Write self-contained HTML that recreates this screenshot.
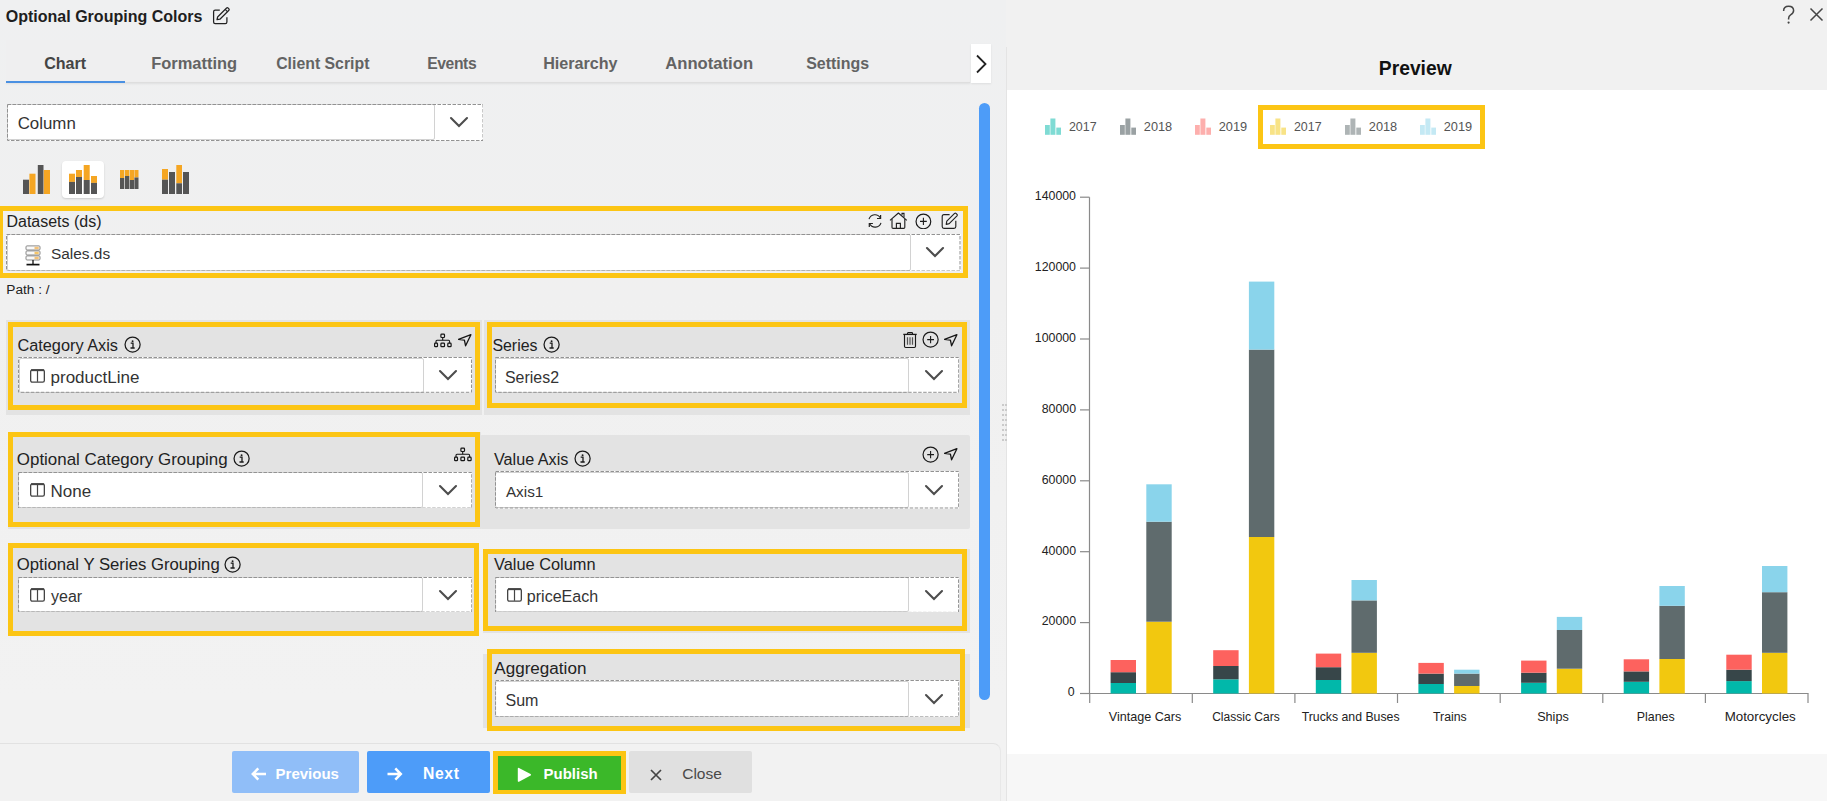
<!DOCTYPE html><html><head><meta charset="utf-8"><style>
html,body{margin:0;padding:0;}
body{width:1827px;height:801px;overflow:hidden;position:relative;background:#f0f0f1;font-family:"Liberation Sans", sans-serif;}
.a{position:absolute;}
.t{position:absolute;white-space:nowrap;}
</style></head><body><div class="a" style="left:0.0px;top:0.0px;width:1006.0px;height:801.0px;background:linear-gradient(#eff0f1 0px,#f0f0f0 300px,#f2f2f2 700px);"></div><div class="a" style="left:1006.0px;top:0.0px;width:821.0px;height:801.0px;background:#f1f1f1;"></div><svg class="a" style="left:212.0px;top:7.0px;" width="19" height="19" viewBox="0 0 19 19"><path d="M7.8 3.1 H3.2 Q1.6 3.1 1.6 4.7 V15.1 Q1.6 16.7 3.2 16.7 H13.3 Q14.9 16.7 14.9 15.1 V10.2" fill="none" stroke="#222" stroke-width="1.25"/><path d="M5.0 12.7 L5.6 10.0 L14.6 1.0 Q15.3 0.4 16.0 1.0 L16.9 1.9 Q17.5 2.6 16.9 3.3 L7.9 12.2 Z" fill="none" stroke="#222" stroke-width="1.2" stroke-linejoin="round"/><path d="M13.2 2.4 L15.6 4.8" stroke="#222" stroke-width="1.1"/></svg><div class="a" style="left:6.0px;top:40.0px;width:964.0px;height:43.0px;background:#efeff0;"></div><div class="a" style="left:6.0px;top:82.0px;width:964.0px;height:1.0px;background:#dedede;box-shadow:0 1px 2px rgba(0,0,0,0.10);"></div><div class="a" style="left:6.0px;top:80.8px;width:119.0px;height:2.2px;background:#4a90e2;"></div><div class="a" style="left:971.0px;top:44.0px;width:20.0px;height:39.0px;background:#fff;box-shadow:0 1px 2px rgba(0,0,0,0.08);"></div><svg class="a" style="left:975.0px;top:54.0px;" width="13" height="20" viewBox="0 0 13 20"><polyline points="2,1.5 10.5,10 2,18.5" fill="none" stroke="#222" stroke-width="1.8"/></svg><div class="a" style="left:6.5px;top:103.6px;width:476.5px;height:37.0px;background:#fff;"></div><div class="a" style="left:7.0px;top:104.1px;width:427.5px;height:36.0px;background:#fff;border:1px solid #d2d2d2;border-radius:2px;box-sizing:border-box;"></div><svg class="a" style="left:6.5px;top:103.6px;" width="476.5" height="37.0" viewBox="0 0 476.5 37.0"><rect x="0.5" y="0.5" width="475.5" height="36.0" fill="none" stroke="#929292" stroke-width="1" stroke-dasharray="3.5 1.5"/></svg><svg class="a" style="left:446.8px;top:114.1px;" width="24" height="16" viewBox="0 0 24 16"><polyline points="4.0,4.1 12,12.1 20.0,4.1" fill="none" stroke="#4d4d4d" stroke-width="2.1" stroke-linecap="round" stroke-linejoin="miter"/></svg><div class="a" style="left:62.0px;top:161.3px;width:42.0px;height:36.7px;background:#fff;border-radius:4px;box-shadow:0 1px 2px rgba(0,0,0,0.15);"></div><svg class="a" style="left:0.0px;top:0.0px;pointer-events:none" width="200" height="200" viewBox="0 0 200 200"><rect x="23" y="179.7" width="6" height="14.300000000000011" fill="#555555"/><rect x="29.4" y="173.7" width="6.100000000000001" height="20.30000000000001" fill="#f5a623"/><rect x="37.8" y="165" width="5.700000000000003" height="29" fill="#555555"/><rect x="43.8" y="170" width="6.200000000000003" height="24" fill="#f5a623"/></svg><svg class="a" style="left:0.0px;top:0.0px;" width="200" height="200" viewBox="0 0 200 200"><rect x="69" y="173.7" width="6" height="8.200000000000017" fill="#f5a623"/><rect x="69" y="181.9" width="6" height="12.099999999999994" fill="#555555"/><rect x="76" y="170" width="6" height="7" fill="#f5a623"/><rect x="76" y="177" width="6" height="17" fill="#555555"/><rect x="83.7" y="165" width="6.0" height="15" fill="#f5a623"/><rect x="83.7" y="180" width="6.0" height="14" fill="#555555"/><rect x="91" y="176" width="6" height="6.900000000000006" fill="#f5a623"/><rect x="91" y="182.9" width="6" height="11.099999999999994" fill="#555555"/></svg><svg class="a" style="left:0.0px;top:0.0px;" width="200" height="200" viewBox="0 0 200 200"><rect x="120" y="170" width="4.299999999999997" height="8" fill="#f5a623"/><rect x="120" y="178" width="4.299999999999997" height="11" fill="#555555"/><rect x="125" y="170" width="4.300000000000011" height="6" fill="#f5a623"/><rect x="125" y="176" width="4.300000000000011" height="13" fill="#555555"/><rect x="129.8" y="170" width="4.199999999999989" height="10" fill="#f5a623"/><rect x="129.8" y="180" width="4.199999999999989" height="9" fill="#555555"/><rect x="134.4" y="170" width="4.099999999999994" height="7.5" fill="#f5a623"/><rect x="134.4" y="177.5" width="4.099999999999994" height="11.5" fill="#555555"/></svg><svg class="a" style="left:0.0px;top:0.0px;" width="200" height="200" viewBox="0 0 200 200"><rect x="162" y="169" width="6" height="10.699999999999989" fill="#f5a623"/><rect x="162" y="179.7" width="6" height="14.300000000000011" fill="#555555"/><rect x="169" y="172" width="6" height="22" fill="#555555"/><rect x="176.3" y="165" width="5.699999999999989" height="18.30000000000001" fill="#f5a623"/><rect x="176.3" y="183.3" width="5.699999999999989" height="10.699999999999989" fill="#555555"/><rect x="183" y="172" width="6" height="22" fill="#555555"/></svg><svg class="a" style="left:867.0px;top:213.0px;" width="16" height="16" viewBox="0 0 16 16"><path d="M13.4 5.0 A6.2 6.2 0 0 0 2.0 6.2" fill="none" stroke="#222" stroke-width="1.1"/><path d="M13.6 1.9 V5.5 H10.0" fill="none" stroke="#222" stroke-width="1.2"/><path d="M2.6 10.8 A6.2 6.2 0 0 0 14.0 9.8" fill="none" stroke="#222" stroke-width="1.1"/><path d="M2.3 14.0 V10.5 H5.9" fill="none" stroke="#222" stroke-width="1.2"/></svg><svg class="a" style="left:888.8px;top:212.2px;" width="19" height="17.5" viewBox="0 0 19 17.5"><path d="M1.0 8.4 L9.4 1.0 L17.8 8.4" fill="none" stroke="#222" stroke-width="1.15" stroke-linejoin="round"/><path d="M3.0 7.0 V15.2 Q3.0 16.3 4.1 16.3 H14.7 Q15.8 16.3 15.8 15.2 V7.0" fill="none" stroke="#222" stroke-width="1.15"/><path d="M7.4 16.3 V11.3 H11.4 V16.3" fill="none" stroke="#222" stroke-width="1.15"/><path d="M13.0 3.2 V1.4 H15.0 V5.4" fill="none" stroke="#222" stroke-width="1.1"/></svg><svg class="a" style="left:915.4px;top:212.6px;" width="16.8" height="16.8" viewBox="0 0 16.8 16.8"><circle cx="8.4" cy="8.4" r="7.3500000000000005" fill="none" stroke="#1a1a1a" stroke-width="1.2"/><path d="M8.4 4.800000000000001 V12.0 M5.0 8.4 H11.8" stroke="#1a1a1a" stroke-width="1.1"/></svg><svg class="a" style="left:940.5px;top:212.3px;" width="17.5" height="17.5" viewBox="0 0 17.5 17.5"><path d="M8.6 2.6 H3.0 Q1.2 2.6 1.2 4.4 V14.6 Q1.2 16.4 3.0 16.4 H13.0 Q14.8 16.4 14.8 14.6 V8.8" fill="none" stroke="#222" stroke-width="1.15"/><path d="M5.2 12.4 L5.8 9.2 L13.6 1.4 Q14.3 0.8 15.0 1.4 L16.0 2.4 Q16.6 3.1 16.0 3.8 L8.2 11.6 Z" fill="none" stroke="#222" stroke-width="1.15" stroke-linejoin="round"/></svg><div class="a" style="left:6.0px;top:233.5px;width:954.5px;height:37.5px;background:#fff;"></div><div class="a" style="left:6.5px;top:234.0px;width:904.5px;height:36.5px;background:#fff;border:1px solid #d2d2d2;border-radius:2px;box-sizing:border-box;"></div><svg class="a" style="left:6.0px;top:233.5px;" width="954.5" height="37.5" viewBox="0 0 954.5 37.5"><rect x="0.5" y="0.5" width="953.5" height="36.5" fill="none" stroke="#929292" stroke-width="1" stroke-dasharray="3.5 1.5"/></svg><svg class="a" style="left:923.2px;top:244.0px;" width="24" height="16" viewBox="0 0 24 16"><polyline points="4.0,4.1 12,12.1 20.0,4.1" fill="none" stroke="#4d4d4d" stroke-width="2.1" stroke-linecap="round" stroke-linejoin="miter"/></svg><svg class="a" style="left:24.5px;top:244.5px;" width="17" height="22" viewBox="0 0 17 22"><rect x="1" y="0.9" width="14" height="4.1" rx="1" fill="#fafafa" stroke="#8a8a8a" stroke-width="1"/>
<rect x="1" y="5.9" width="14" height="4.1" rx="1" fill="#fafafa" stroke="#8a8a8a" stroke-width="1"/>
<rect x="1" y="10.9" width="14" height="4.1" rx="1" fill="#fafafa" stroke="#8a8a8a" stroke-width="1"/>
<rect x="9.5" y="1.8" width="4.2" height="2.4" fill="#f3c27a"/><rect x="9.5" y="6.8" width="4.2" height="2.4" fill="#f5c56a"/><rect x="9.5" y="11.8" width="4.2" height="2.4" fill="#f3c27a"/>
<line x1="8" y1="15" x2="8" y2="19" stroke="#111" stroke-width="1.3"/><line x1="1.5" y1="19.6" x2="14.5" y2="19.6" stroke="#111" stroke-width="1.7"/></svg><div class="a" style="left:-2.0px;top:205.6px;width:970.0px;height:72.1px;border:5.4px solid #fcc514;box-sizing:border-box;"></div><div class="a" style="left:6.0px;top:320.0px;width:475.5px;height:94.5px;background:#e3e3e3;"></div><svg class="a" style="left:123.8px;top:336.4px;" width="17.2" height="17.2" viewBox="0 0 17.2 17.2"><circle cx="8.6" cy="8.6" r="7.55" fill="none" stroke="#1a1a1a" stroke-width="1.25"/><circle cx="8.6" cy="5.159999999999999" r="0.95" fill="#1a1a1a"/><path d="M6.699999999999999 7.199999999999999 H9.0 V11.899999999999999 M6.5 12.0 H10.7" fill="none" stroke="#1a1a1a" stroke-width="1.3"/></svg><svg class="a" style="left:433.0px;top:332.5px;" width="19" height="15" viewBox="0 0 19 15"><rect x="7.9" y="1.2" width="3.6" height="3.3" rx="0.8" fill="none" stroke="#151515" stroke-width="1.2"/>
<line x1="9.7" y1="4.5" x2="9.7" y2="7.3" stroke="#151515" stroke-width="1.1"/>
<path d="M3.0 10.2 V8.3 Q3.0 7.3 4.0 7.3 H15.6 Q16.6 7.3 16.6 8.3 V10.2" fill="none" stroke="#151515" stroke-width="1.05"/>
<rect x="1.6" y="10.2" width="2.9" height="3.5" rx="0.8" fill="none" stroke="#151515" stroke-width="1.2"/>
<rect x="7.9" y="10.2" width="3.6" height="3.5" rx="0.8" fill="none" stroke="#151515" stroke-width="1.2"/>
<rect x="14.8" y="10.2" width="3.3" height="3.5" rx="0.8" fill="none" stroke="#151515" stroke-width="1.2"/></svg><svg class="a" style="left:458.0px;top:333.5px;" width="14" height="13" viewBox="0 0 14 13"><path d="M0.5 5.4 L12.9 0.7 L7.6 11.8 L6.4 6.1 Z" fill="none" stroke="#151515" stroke-width="1.3" stroke-linejoin="round"/></svg><div class="a" style="left:18.0px;top:357.4px;width:454.0px;height:35.8px;background:#fff;"></div><div class="a" style="left:18.5px;top:357.9px;width:405.0px;height:34.8px;background:#fff;border:1px solid #d2d2d2;border-radius:2px;box-sizing:border-box;"></div><svg class="a" style="left:18.0px;top:357.4px;" width="454" height="35.80000000000001" viewBox="0 0 454 35.80000000000001"><rect x="0.5" y="0.5" width="453.0" height="34.8" fill="none" stroke="#929292" stroke-width="1" stroke-dasharray="3.5 1.5"/></svg><svg class="a" style="left:435.8px;top:367.3px;" width="24" height="16" viewBox="0 0 24 16"><polyline points="4.0,4.1 12,12.1 20.0,4.1" fill="none" stroke="#4d4d4d" stroke-width="2.1" stroke-linecap="round" stroke-linejoin="miter"/></svg><svg class="a" style="left:29.3px;top:367.7px;" width="17" height="15.8" viewBox="0 0 17 15.8"><rect x="1.65" y="1.9" width="13.70" height="12.30" rx="1.6" fill="none" stroke="#444" stroke-width="1.3"/><line x1="2" y1="2.2" x2="15.00" y2="2.2" stroke="#444" stroke-width="1.9"/><line x1="8.50" y1="2" x2="8.50" y2="13.80" stroke="#444" stroke-width="1.2"/></svg><div class="a" style="left:8.2px;top:322.4px;width:471.6px;height:87.3px;border:5.4px solid #fcc514;box-sizing:border-box;"></div><div class="a" style="left:484.0px;top:320.0px;width:485.5px;height:94.5px;background:#e3e3e3;"></div><svg class="a" style="left:542.6px;top:336.4px;" width="17.2" height="17.2" viewBox="0 0 17.2 17.2"><circle cx="8.6" cy="8.6" r="7.55" fill="none" stroke="#1a1a1a" stroke-width="1.25"/><circle cx="8.6" cy="5.159999999999999" r="0.95" fill="#1a1a1a"/><path d="M6.699999999999999 7.199999999999999 H9.0 V11.899999999999999 M6.5 12.0 H10.7" fill="none" stroke="#1a1a1a" stroke-width="1.3"/></svg><svg class="a" style="left:903.0px;top:332.0px;" width="14" height="17" viewBox="0 0 14 17"><path d="M0.3 2.4 H13.7" stroke="#1a1a1a" stroke-width="1.3"/><path d="M4.5 2.4 V1.3 Q4.5 0.6 5.2 0.6 H8.8 Q9.5 0.6 9.5 1.3 V2.4" fill="none" stroke="#1a1a1a" stroke-width="1.1"/><path d="M1.5 2.4 V14.3 Q1.5 15.5 2.7 15.5 H11.3 Q12.5 15.5 12.5 14.3 V2.4" fill="none" stroke="#1a1a1a" stroke-width="1.15"/><path d="M4.5 5.2 V12.8 M7.0 5.2 V12.8 M9.5 5.2 V12.8" stroke="#555" stroke-width="1.2"/></svg><svg class="a" style="left:922.0px;top:331.2px;" width="17.2" height="17.2" viewBox="0 0 17.2 17.2"><circle cx="8.6" cy="8.6" r="7.55" fill="none" stroke="#1a1a1a" stroke-width="1.2"/><path d="M8.6 5.0 V12.2 M5.199999999999999 8.6 H12.0" stroke="#1a1a1a" stroke-width="1.1"/></svg><svg class="a" style="left:944.3px;top:333.5px;" width="14" height="13" viewBox="0 0 14 13"><path d="M0.5 5.4 L12.9 0.7 L7.6 11.8 L6.4 6.1 Z" fill="none" stroke="#151515" stroke-width="1.3" stroke-linejoin="round"/></svg><div class="a" style="left:494.8px;top:357.4px;width:464.2px;height:35.8px;background:#fff;"></div><div class="a" style="left:495.3px;top:357.9px;width:413.9px;height:34.8px;background:#fff;border:1px solid #d2d2d2;border-radius:2px;box-sizing:border-box;"></div><svg class="a" style="left:494.8px;top:357.4px;" width="464.2" height="35.80000000000001" viewBox="0 0 464.2 35.80000000000001"><rect x="0.5" y="0.5" width="463.2" height="34.8" fill="none" stroke="#929292" stroke-width="1" stroke-dasharray="3.5 1.5"/></svg><svg class="a" style="left:922.1px;top:367.3px;" width="24" height="16" viewBox="0 0 24 16"><polyline points="4.0,4.1 12,12.1 20.0,4.1" fill="none" stroke="#4d4d4d" stroke-width="2.1" stroke-linecap="round" stroke-linejoin="miter"/></svg><div class="a" style="left:486.8px;top:322.0px;width:480.5px;height:85.9px;border:5.2px solid #fcc514;box-sizing:border-box;"></div><div class="a" style="left:8.0px;top:432.0px;width:473.0px;height:97.0px;background:#e3e3e3;"></div><svg class="a" style="left:233.3px;top:450.1px;" width="17.2" height="17.2" viewBox="0 0 17.2 17.2"><circle cx="8.6" cy="8.6" r="7.55" fill="none" stroke="#1a1a1a" stroke-width="1.25"/><circle cx="8.6" cy="5.159999999999999" r="0.95" fill="#1a1a1a"/><path d="M6.699999999999999 7.199999999999999 H9.0 V11.899999999999999 M6.5 12.0 H10.7" fill="none" stroke="#1a1a1a" stroke-width="1.3"/></svg><svg class="a" style="left:453.0px;top:447.0px;" width="19" height="15" viewBox="0 0 19 15"><rect x="7.9" y="1.2" width="3.6" height="3.3" rx="0.8" fill="none" stroke="#151515" stroke-width="1.2"/>
<line x1="9.7" y1="4.5" x2="9.7" y2="7.3" stroke="#151515" stroke-width="1.1"/>
<path d="M3.0 10.2 V8.3 Q3.0 7.3 4.0 7.3 H15.6 Q16.6 7.3 16.6 8.3 V10.2" fill="none" stroke="#151515" stroke-width="1.05"/>
<rect x="1.6" y="10.2" width="2.9" height="3.5" rx="0.8" fill="none" stroke="#151515" stroke-width="1.2"/>
<rect x="7.9" y="10.2" width="3.6" height="3.5" rx="0.8" fill="none" stroke="#151515" stroke-width="1.2"/>
<rect x="14.8" y="10.2" width="3.3" height="3.5" rx="0.8" fill="none" stroke="#151515" stroke-width="1.2"/></svg><div class="a" style="left:17.7px;top:471.7px;width:454.3px;height:36.6px;background:#fff;"></div><div class="a" style="left:18.2px;top:472.2px;width:405.3px;height:35.6px;background:#fff;border:1px solid #d2d2d2;border-radius:2px;box-sizing:border-box;"></div><svg class="a" style="left:17.7px;top:471.7px;" width="454.3" height="36.60000000000002" viewBox="0 0 454.3 36.60000000000002"><rect x="0.5" y="0.5" width="453.3" height="35.6" fill="none" stroke="#929292" stroke-width="1" stroke-dasharray="3.5 1.5"/></svg><svg class="a" style="left:435.8px;top:482.0px;" width="24" height="16" viewBox="0 0 24 16"><polyline points="4.0,4.1 12,12.1 20.0,4.1" fill="none" stroke="#4d4d4d" stroke-width="2.1" stroke-linecap="round" stroke-linejoin="miter"/></svg><svg class="a" style="left:29.0px;top:482.4px;" width="17" height="15.8" viewBox="0 0 17 15.8"><rect x="1.65" y="1.9" width="13.70" height="12.30" rx="1.6" fill="none" stroke="#444" stroke-width="1.3"/><line x1="2" y1="2.2" x2="15.00" y2="2.2" stroke="#444" stroke-width="1.9"/><line x1="8.50" y1="2" x2="8.50" y2="13.80" stroke="#444" stroke-width="1.2"/></svg><div class="a" style="left:8.2px;top:432.3px;width:471.6px;height:94.9px;border:5.3px solid #fcc514;box-sizing:border-box;"></div><div class="a" style="left:480.0px;top:435.0px;width:489.7px;height:94.2px;background:#e3e3e3;border-radius:2px;"></div><svg class="a" style="left:573.6px;top:450.1px;" width="17.2" height="17.2" viewBox="0 0 17.2 17.2"><circle cx="8.6" cy="8.6" r="7.55" fill="none" stroke="#1a1a1a" stroke-width="1.25"/><circle cx="8.6" cy="5.159999999999999" r="0.95" fill="#1a1a1a"/><path d="M6.699999999999999 7.199999999999999 H9.0 V11.899999999999999 M6.5 12.0 H10.7" fill="none" stroke="#1a1a1a" stroke-width="1.3"/></svg><svg class="a" style="left:921.8px;top:445.5px;" width="17.2" height="17.2" viewBox="0 0 17.2 17.2"><circle cx="8.6" cy="8.6" r="7.55" fill="none" stroke="#1a1a1a" stroke-width="1.2"/><path d="M8.6 5.0 V12.2 M5.199999999999999 8.6 H12.0" stroke="#1a1a1a" stroke-width="1.1"/></svg><svg class="a" style="left:944.3px;top:447.6px;" width="14" height="13" viewBox="0 0 14 13"><path d="M0.5 5.4 L12.9 0.7 L7.6 11.8 L6.4 6.1 Z" fill="none" stroke="#151515" stroke-width="1.3" stroke-linejoin="round"/></svg><div class="a" style="left:494.7px;top:471.3px;width:464.1px;height:37.5px;background:#fff;"></div><div class="a" style="left:495.2px;top:471.8px;width:414.3px;height:36.5px;background:#fff;border:1px solid #d2d2d2;border-radius:2px;box-sizing:border-box;"></div><svg class="a" style="left:494.7px;top:471.3px;" width="464.09999999999997" height="37.5" viewBox="0 0 464.09999999999997 37.5"><rect x="0.5" y="0.5" width="463.1" height="36.5" fill="none" stroke="#929292" stroke-width="1" stroke-dasharray="3.5 1.5"/></svg><svg class="a" style="left:922.1px;top:482.1px;" width="24" height="16" viewBox="0 0 24 16"><polyline points="4.0,4.1 12,12.1 20.0,4.1" fill="none" stroke="#4d4d4d" stroke-width="2.1" stroke-linecap="round" stroke-linejoin="miter"/></svg><div class="a" style="left:8.0px;top:543.0px;width:471.0px;height:92.5px;background:#e3e3e3;"></div><svg class="a" style="left:224.3px;top:555.7px;" width="17.2" height="17.2" viewBox="0 0 17.2 17.2"><circle cx="8.6" cy="8.6" r="7.55" fill="none" stroke="#1a1a1a" stroke-width="1.25"/><circle cx="8.6" cy="5.159999999999999" r="0.95" fill="#1a1a1a"/><path d="M6.699999999999999 7.199999999999999 H9.0 V11.899999999999999 M6.5 12.0 H10.7" fill="none" stroke="#1a1a1a" stroke-width="1.3"/></svg><div class="a" style="left:17.7px;top:576.7px;width:454.3px;height:35.6px;background:#fff;"></div><div class="a" style="left:18.2px;top:577.2px;width:405.3px;height:34.6px;background:#fff;border:1px solid #d2d2d2;border-radius:2px;box-sizing:border-box;"></div><svg class="a" style="left:17.7px;top:576.7px;" width="454.3" height="35.59999999999991" viewBox="0 0 454.3 35.59999999999991"><rect x="0.5" y="0.5" width="453.3" height="34.6" fill="none" stroke="#929292" stroke-width="1" stroke-dasharray="3.5 1.5"/></svg><svg class="a" style="left:435.8px;top:586.5px;" width="24" height="16" viewBox="0 0 24 16"><polyline points="4.0,4.1 12,12.1 20.0,4.1" fill="none" stroke="#4d4d4d" stroke-width="2.1" stroke-linecap="round" stroke-linejoin="miter"/></svg><svg class="a" style="left:29.0px;top:586.9px;" width="17" height="15.8" viewBox="0 0 17 15.8"><rect x="1.65" y="1.9" width="13.70" height="12.30" rx="1.6" fill="none" stroke="#444" stroke-width="1.3"/><line x1="2" y1="2.2" x2="15.00" y2="2.2" stroke="#444" stroke-width="1.9"/><line x1="8.50" y1="2" x2="8.50" y2="13.80" stroke="#444" stroke-width="1.2"/></svg><div class="a" style="left:8.2px;top:543.2px;width:471.0px;height:92.5px;border:5.3px solid #fcc514;box-sizing:border-box;"></div><div class="a" style="left:483.0px;top:549.0px;width:486.7px;height:84.0px;background:#e3e3e3;"></div><div class="a" style="left:494.7px;top:576.6px;width:464.1px;height:35.9px;background:#fff;"></div><div class="a" style="left:495.2px;top:577.1px;width:414.3px;height:34.9px;background:#fff;border:1px solid #d2d2d2;border-radius:2px;box-sizing:border-box;"></div><svg class="a" style="left:494.7px;top:576.6px;" width="464.09999999999997" height="35.89999999999998" viewBox="0 0 464.09999999999997 35.89999999999998"><rect x="0.5" y="0.5" width="463.1" height="34.9" fill="none" stroke="#929292" stroke-width="1" stroke-dasharray="3.5 1.5"/></svg><svg class="a" style="left:922.1px;top:586.5px;" width="24" height="16" viewBox="0 0 24 16"><polyline points="4.0,4.1 12,12.1 20.0,4.1" fill="none" stroke="#4d4d4d" stroke-width="2.1" stroke-linecap="round" stroke-linejoin="miter"/></svg><svg class="a" style="left:506.0px;top:586.9px;" width="17" height="15.8" viewBox="0 0 17 15.8"><rect x="1.65" y="1.9" width="13.70" height="12.30" rx="1.6" fill="none" stroke="#444" stroke-width="1.3"/><line x1="2" y1="2.2" x2="15.00" y2="2.2" stroke="#444" stroke-width="1.9"/><line x1="8.50" y1="2" x2="8.50" y2="13.80" stroke="#444" stroke-width="1.2"/></svg><div class="a" style="left:483.1px;top:549.2px;width:484.2px;height:81.6px;border:5.2px solid #fcc514;box-sizing:border-box;"></div><div class="a" style="left:483.0px;top:654.0px;width:486.7px;height:73.6px;background:#e3e3e3;"></div><div class="a" style="left:494.7px;top:680.0px;width:464.3px;height:37.4px;background:#fff;"></div><div class="a" style="left:495.2px;top:680.5px;width:414.1px;height:36.4px;background:#fff;border:1px solid #d2d2d2;border-radius:2px;box-sizing:border-box;"></div><svg class="a" style="left:494.7px;top:680.0px;" width="464.3" height="37.39999999999998" viewBox="0 0 464.3 37.39999999999998"><rect x="0.5" y="0.5" width="463.3" height="36.4" fill="none" stroke="#929292" stroke-width="1" stroke-dasharray="3.5 1.5"/></svg><svg class="a" style="left:922.1px;top:690.7px;" width="24" height="16" viewBox="0 0 24 16"><polyline points="4.0,4.1 12,12.1 20.0,4.1" fill="none" stroke="#4d4d4d" stroke-width="2.1" stroke-linecap="round" stroke-linejoin="miter"/></svg><div class="a" style="left:487.2px;top:648.9px;width:478.0px;height:81.8px;border:5.2px solid #fcc514;box-sizing:border-box;"></div><div class="a" style="left:979.0px;top:102.8px;width:11.0px;height:597.0px;background:#4d9cf8;border-radius:5.5px;"></div><div class="a" style="left:0.0px;top:743.0px;width:1001.0px;height:58.0px;background:#f2f2f2;border-top:1px solid #e2e2e2;border-right:1px solid #e8e8e8;border-top-right-radius:8px;box-sizing:border-box;"></div><div class="a" style="left:232.3px;top:751.0px;width:126.5px;height:42.0px;background:#90bef8;border-radius:2px;"></div><svg class="a" style="left:251.0px;top:767.0px;" width="16" height="14" viewBox="0 0 16 14"><path d="M1.8 7 H15 M7.3 1.4 L1.8 7 L7.3 12.6" fill="none" stroke="#fff" stroke-width="2.5" stroke-linejoin="miter"/></svg><div class="a" style="left:367.1px;top:751.0px;width:122.6px;height:42.0px;background:#4d9cf9;border-radius:2px;"></div><svg class="a" style="left:386.5px;top:767.0px;" width="16" height="14" viewBox="0 0 16 14"><path d="M0.5 7 H13.8 M8.3 1.4 L13.8 7 L8.3 12.6" fill="none" stroke="#fff" stroke-width="2.5"/></svg><div class="a" style="left:493.0px;top:751.0px;width:133.0px;height:43.4px;background:#fcc514;"></div><div class="a" style="left:498.0px;top:756.1px;width:123.0px;height:33.8px;background:#3bb829;"></div><svg class="a" style="left:517.0px;top:766.5px;" width="15" height="16" viewBox="0 0 15 16"><path d="M1.6 1.6 L13.2 7.8 L1.6 14.0 Z" fill="#fff" stroke="#fff" stroke-width="1.6" stroke-linejoin="round"/></svg><div class="a" style="left:629.4px;top:751.0px;width:122.6px;height:41.5px;background:#e0e0e0;border-radius:2px;"></div><svg class="a" style="left:649.5px;top:768.5px;" width="12" height="12" viewBox="0 0 12 12"><path d="M1 1 L11 11 M11 1 L1 11" stroke="#444" stroke-width="1.7"/></svg><div class="a" style="left:1006.0px;top:0.0px;width:821.0px;height:801.0px;background:#f1f1f1;"></div><div class="a" style="left:1005.5px;top:47.0px;width:1.0px;height:754.0px;background:#e4e4e4;"></div><svg class="a" style="left:1002.0px;top:404.0px;" width="6" height="40" viewBox="0 0 6 40"><rect x="0" y="0" width="2" height="2" fill="#cacaca"/><rect x="3" y="0" width="2" height="2" fill="#cacaca"/><rect x="0" y="5" width="2" height="2" fill="#cacaca"/><rect x="3" y="5" width="2" height="2" fill="#cacaca"/><rect x="0" y="10" width="2" height="2" fill="#cacaca"/><rect x="3" y="10" width="2" height="2" fill="#cacaca"/><rect x="0" y="15" width="2" height="2" fill="#cacaca"/><rect x="3" y="15" width="2" height="2" fill="#cacaca"/><rect x="0" y="20" width="2" height="2" fill="#cacaca"/><rect x="3" y="20" width="2" height="2" fill="#cacaca"/><rect x="0" y="25" width="2" height="2" fill="#cacaca"/><rect x="3" y="25" width="2" height="2" fill="#cacaca"/><rect x="0" y="30" width="2" height="2" fill="#cacaca"/><rect x="3" y="30" width="2" height="2" fill="#cacaca"/><rect x="0" y="35" width="2" height="2" fill="#cacaca"/><rect x="3" y="35" width="2" height="2" fill="#cacaca"/></svg><svg class="a" style="left:1781.0px;top:5.0px;" width="16" height="20" viewBox="0 0 16 20"><path d="M2.6 6 Q2.6 1.2 7.6 1.2 Q12.6 1.2 12.6 5.6 Q12.6 8.2 9.6 9.8 Q7.6 11 7.6 13.5 V14.6" fill="none" stroke="#444" stroke-width="1.5"/><circle cx="7.6" cy="17.6" r="1.1" fill="#444"/></svg><svg class="a" style="left:1808.5px;top:6.5px;" width="15" height="15" viewBox="0 0 15 15"><path d="M1.5 1.5 L13.5 13.5 M13.5 1.5 L1.5 13.5" stroke="#444" stroke-width="1.5"/></svg><div class="a" style="left:1007.0px;top:90.4px;width:820.0px;height:663.6px;background:#fff;"></div><div class="a" style="left:1007.0px;top:754.0px;width:820.0px;height:47.0px;background:#f7f7f7;"></div><svg class="a" style="left:1044.9px;top:117.5px;" width="16.5" height="17" viewBox="0 0 16.5 17"><g fill="#01b8aa" opacity="0.5"><rect x="0" y="7" width="4.8" height="9.8"/><rect x="5.4" y="0.5" width="5" height="16.3"/><rect x="11.3" y="9.6" width="4.8" height="7.2"/></g></svg><svg class="a" style="left:1119.9px;top:117.5px;" width="16.5" height="17" viewBox="0 0 16.5 17"><g fill="#374649" opacity="0.5"><rect x="0" y="7" width="4.8" height="9.8"/><rect x="5.4" y="0.5" width="5" height="16.3"/><rect x="11.3" y="9.6" width="4.8" height="7.2"/></g></svg><svg class="a" style="left:1194.9px;top:117.5px;" width="16.5" height="17" viewBox="0 0 16.5 17"><g fill="#fd625e" opacity="0.5"><rect x="0" y="7" width="4.8" height="9.8"/><rect x="5.4" y="0.5" width="5" height="16.3"/><rect x="11.3" y="9.6" width="4.8" height="7.2"/></g></svg><svg class="a" style="left:1269.9px;top:117.5px;" width="16.5" height="17" viewBox="0 0 16.5 17"><g fill="#f2c80f" opacity="0.5"><rect x="0" y="7" width="4.8" height="9.8"/><rect x="5.4" y="0.5" width="5" height="16.3"/><rect x="11.3" y="9.6" width="4.8" height="7.2"/></g></svg><svg class="a" style="left:1344.9px;top:117.5px;" width="16.5" height="17" viewBox="0 0 16.5 17"><g fill="#5f6b6d" opacity="0.5"><rect x="0" y="7" width="4.8" height="9.8"/><rect x="5.4" y="0.5" width="5" height="16.3"/><rect x="11.3" y="9.6" width="4.8" height="7.2"/></g></svg><svg class="a" style="left:1419.9px;top:117.5px;" width="16.5" height="17" viewBox="0 0 16.5 17"><g fill="#8ad4eb" opacity="0.5"><rect x="0" y="7" width="4.8" height="9.8"/><rect x="5.4" y="0.5" width="5" height="16.3"/><rect x="11.3" y="9.6" width="4.8" height="7.2"/></g></svg><div class="a" style="left:1258.2px;top:104.9px;width:226.6px;height:43.8px;border:5px solid #fcc514;box-sizing:border-box;"></div><svg class="a" style="left:0.0px;top:0.0px;" width="1827" height="801" viewBox="0 0 1827 801"><line x1="1089.5" y1="197.2" x2="1089.5" y2="693.5" stroke="#8a8a8a" stroke-width="1.2"/><line x1="1080" y1="693.5" x2="1089.5" y2="693.5" stroke="#8a8a8a" stroke-width="1.2"/><line x1="1080" y1="622.6" x2="1089.5" y2="622.6" stroke="#8a8a8a" stroke-width="1.2"/><line x1="1080" y1="551.7" x2="1089.5" y2="551.7" stroke="#8a8a8a" stroke-width="1.2"/><line x1="1080" y1="480.8" x2="1089.5" y2="480.8" stroke="#8a8a8a" stroke-width="1.2"/><line x1="1080" y1="409.9" x2="1089.5" y2="409.9" stroke="#8a8a8a" stroke-width="1.2"/><line x1="1080" y1="339.0" x2="1089.5" y2="339.0" stroke="#8a8a8a" stroke-width="1.2"/><line x1="1080" y1="268.1" x2="1089.5" y2="268.1" stroke="#8a8a8a" stroke-width="1.2"/><line x1="1080" y1="197.2" x2="1089.5" y2="197.2" stroke="#8a8a8a" stroke-width="1.2"/><line x1="1080" y1="693.5" x2="1808.5" y2="693.5" stroke="#8a8a8a" stroke-width="1.2"/><line x1="1089.7" y1="693.5" x2="1089.7" y2="703" stroke="#8a8a8a" stroke-width="1.2"/><line x1="1192.3" y1="693.5" x2="1192.3" y2="703" stroke="#8a8a8a" stroke-width="1.2"/><line x1="1294.9" y1="693.5" x2="1294.9" y2="703" stroke="#8a8a8a" stroke-width="1.2"/><line x1="1397.5" y1="693.5" x2="1397.5" y2="703" stroke="#8a8a8a" stroke-width="1.2"/><line x1="1500.2" y1="693.5" x2="1500.2" y2="703" stroke="#8a8a8a" stroke-width="1.2"/><line x1="1602.8" y1="693.5" x2="1602.8" y2="703" stroke="#8a8a8a" stroke-width="1.2"/><line x1="1705.4" y1="693.5" x2="1705.4" y2="703" stroke="#8a8a8a" stroke-width="1.2"/><line x1="1808.0" y1="693.5" x2="1808.0" y2="703" stroke="#8a8a8a" stroke-width="1.2"/><rect x="1110.6" y="683" width="25.4" height="10.5" fill="#01b8aa"/><rect x="1110.6" y="672.2" width="25.4" height="10.8" fill="#374649"/><rect x="1110.6" y="660" width="25.4" height="12.2" fill="#fd625e"/><rect x="1146.3" y="621.7" width="25.4" height="71.8" fill="#f2c80f"/><rect x="1146.3" y="521.7" width="25.4" height="100.0" fill="#5f6b6d"/><rect x="1146.3" y="484.3" width="25.4" height="37.4" fill="#8ad4eb"/><rect x="1213.2" y="679.3" width="25.4" height="14.2" fill="#01b8aa"/><rect x="1213.2" y="666" width="25.4" height="13.3" fill="#374649"/><rect x="1213.2" y="650.2" width="25.4" height="15.8" fill="#fd625e"/><rect x="1248.9" y="537" width="25.4" height="156.5" fill="#f2c80f"/><rect x="1248.9" y="349.6" width="25.4" height="187.4" fill="#5f6b6d"/><rect x="1248.9" y="281.6" width="25.4" height="68.0" fill="#8ad4eb"/><rect x="1315.8" y="680" width="25.4" height="13.5" fill="#01b8aa"/><rect x="1315.8" y="667.2" width="25.4" height="12.8" fill="#374649"/><rect x="1315.8" y="653.6" width="25.4" height="13.6" fill="#fd625e"/><rect x="1351.5" y="652.8" width="25.4" height="40.7" fill="#f2c80f"/><rect x="1351.5" y="600.4" width="25.4" height="52.4" fill="#5f6b6d"/><rect x="1351.5" y="580" width="25.4" height="20.4" fill="#8ad4eb"/><rect x="1418.4" y="684" width="25.4" height="9.5" fill="#01b8aa"/><rect x="1418.4" y="673.6" width="25.4" height="10.4" fill="#374649"/><rect x="1418.4" y="662.9" width="25.4" height="10.7" fill="#fd625e"/><rect x="1454.1" y="686" width="25.4" height="7.5" fill="#f2c80f"/><rect x="1454.1" y="673.6" width="25.4" height="12.4" fill="#5f6b6d"/><rect x="1454.1" y="669.7" width="25.4" height="3.9" fill="#8ad4eb"/><rect x="1521.1" y="682.8" width="25.4" height="10.7" fill="#01b8aa"/><rect x="1521.1" y="672.7" width="25.4" height="10.1" fill="#374649"/><rect x="1521.1" y="660.6" width="25.4" height="12.1" fill="#fd625e"/><rect x="1556.8" y="668.7" width="25.4" height="24.8" fill="#f2c80f"/><rect x="1556.8" y="630" width="25.4" height="38.7" fill="#5f6b6d"/><rect x="1556.8" y="616.9" width="25.4" height="13.1" fill="#8ad4eb"/><rect x="1623.7" y="681.8" width="25.4" height="11.7" fill="#01b8aa"/><rect x="1623.7" y="671.4" width="25.4" height="10.4" fill="#374649"/><rect x="1623.7" y="659.3" width="25.4" height="12.1" fill="#fd625e"/><rect x="1659.4" y="659" width="25.4" height="34.5" fill="#f2c80f"/><rect x="1659.4" y="605.8" width="25.4" height="53.2" fill="#5f6b6d"/><rect x="1659.4" y="586" width="25.4" height="19.8" fill="#8ad4eb"/><rect x="1726.3" y="681.1" width="25.4" height="12.4" fill="#01b8aa"/><rect x="1726.3" y="669.7" width="25.4" height="11.4" fill="#374649"/><rect x="1726.3" y="654.7" width="25.4" height="15.0" fill="#fd625e"/><rect x="1762.0" y="652.8" width="25.4" height="40.7" fill="#f2c80f"/><rect x="1762.0" y="592.2" width="25.4" height="60.6" fill="#5f6b6d"/><rect x="1762.0" y="566" width="25.4" height="26.2" fill="#8ad4eb"/></svg><svg class="a" style="left:0;top:0;pointer-events:none" width="1827" height="801" viewBox="0 0 1827 801"><text x="5.70" y="22.00" font-size="16.05" font-weight="700" fill="#1e1e1e" text-anchor="start">Optional Grouping Colors</text><text x="44.20" y="69.20" font-size="16.09" font-weight="700" fill="#444" text-anchor="start">Chart</text><text x="151.20" y="69.20" font-size="16.48" font-weight="700" fill="#636363" text-anchor="start">Formatting</text><text x="276.20" y="69.20" font-size="15.84" font-weight="700" fill="#636363" text-anchor="start">Client Script</text><text x="427.20" y="69.20" font-size="15.7" font-weight="700" fill="#636363" text-anchor="start" letter-spacing="-0.4">Events</text><text x="543.20" y="69.20" font-size="16.14" font-weight="700" fill="#636363" text-anchor="start">Hierarchy</text><text x="665.20" y="69.20" font-size="16.67" font-weight="700" fill="#636363" text-anchor="start">Annotation</text><text x="806.20" y="69.20" font-size="15.96" font-weight="700" fill="#636363" text-anchor="start">Settings</text><text x="17.70" y="129.30" font-size="16.86" font-weight="400" fill="#333" text-anchor="start">Column</text><text x="6.50" y="227.00" font-size="15.98" font-weight="400" fill="#222" text-anchor="start">Datasets (ds)</text><text x="51.00" y="258.60" font-size="15.43" font-weight="400" fill="#333" text-anchor="start">Sales.ds</text><text x="6.30" y="293.80" font-size="13.66" font-weight="400" fill="#222" text-anchor="start">Path : /</text><text x="17.40" y="351.00" font-size="16.32" font-weight="400" fill="#222" text-anchor="start">Category Axis</text><text x="50.50" y="382.50" font-size="17.03" font-weight="400" fill="#333" text-anchor="start">productLine</text><text x="492.40" y="351.00" font-size="15.91" font-weight="400" fill="#222" text-anchor="start">Series</text><text x="505.00" y="382.50" font-size="15.93" font-weight="400" fill="#333" text-anchor="start">Series2</text><text x="16.80" y="464.60" font-size="16.96" font-weight="400" fill="#222" text-anchor="start">Optional Category Grouping</text><text x="50.60" y="497.20" font-size="16.99" font-weight="400" fill="#333" text-anchor="start">None</text><text x="494.00" y="464.60" font-size="16.18" font-weight="400" fill="#222" text-anchor="start">Value Axis</text><text x="505.90" y="497.25" font-size="15.31" font-weight="400" fill="#333" text-anchor="start">Axis1</text><text x="16.80" y="570.10" font-size="16.73" font-weight="400" fill="#222" text-anchor="start">Optional Y Series Grouping</text><text x="51.00" y="601.70" font-size="16.01" font-weight="400" fill="#333" text-anchor="start">year</text><text x="494.00" y="570.00" font-size="16.38" font-weight="400" fill="#222" text-anchor="start">Value Column</text><text x="526.80" y="601.75" font-size="16.06" font-weight="400" fill="#333" text-anchor="start">priceEach</text><text x="494.30" y="673.60" font-size="17.09" font-weight="400" fill="#222" text-anchor="start">Aggregation</text><text x="505.50" y="705.90" font-size="16.05" font-weight="400" fill="#333" text-anchor="start">Sum</text><text x="275.60" y="779.00" font-size="14.99" font-weight="700" fill="#fff" text-anchor="start">Previous</text><text x="423.00" y="779.00" font-size="15.73" font-weight="700" fill="#fff" text-anchor="start" letter-spacing="0.6">Next</text><text x="543.60" y="779.00" font-size="14.97" font-weight="700" fill="#fff" text-anchor="start">Publish</text><text x="682.20" y="779.00" font-size="15.54" font-weight="400" fill="#4a4a4a" text-anchor="start">Close</text><text x="1378.80" y="75.00" font-size="19.29" font-weight="700" fill="#111" text-anchor="start">Preview</text><text x="1068.90" y="131.00" font-size="12.44" font-weight="400" fill="#555" text-anchor="start">2017</text><text x="1143.80" y="131.00" font-size="12.77" font-weight="400" fill="#555" text-anchor="start">2018</text><text x="1218.70" y="131.00" font-size="12.77" font-weight="400" fill="#555" text-anchor="start">2019</text><text x="1293.90" y="131.00" font-size="12.44" font-weight="400" fill="#555" text-anchor="start">2017</text><text x="1368.80" y="131.00" font-size="12.77" font-weight="400" fill="#555" text-anchor="start">2018</text><text x="1443.70" y="131.00" font-size="12.77" font-weight="400" fill="#555" text-anchor="start">2019</text><text x="1074.70" y="696.30" font-size="12.35" font-weight="400" fill="#222" text-anchor="end">0</text><text x="1076.00" y="625.40" font-size="12.35" font-weight="400" fill="#222" text-anchor="end">20000</text><text x="1076.00" y="554.50" font-size="12.35" font-weight="400" fill="#222" text-anchor="end">40000</text><text x="1076.00" y="483.60" font-size="12.35" font-weight="400" fill="#222" text-anchor="end">60000</text><text x="1076.00" y="412.70" font-size="12.35" font-weight="400" fill="#222" text-anchor="end">80000</text><text x="1076.00" y="341.80" font-size="12.35" font-weight="400" fill="#222" text-anchor="end">100000</text><text x="1076.00" y="270.90" font-size="12.35" font-weight="400" fill="#222" text-anchor="end">120000</text><text x="1076.00" y="200.00" font-size="12.35" font-weight="400" fill="#222" text-anchor="end">140000</text><text x="1145.11" y="721.00" font-size="12.59" font-weight="400" fill="#222" text-anchor="middle">Vintage Cars</text><text x="1245.92" y="721.00" font-size="12.04" font-weight="400" fill="#222" text-anchor="middle">Classic Cars</text><text x="1350.64" y="721.00" font-size="12.29" font-weight="400" fill="#222" text-anchor="middle">Trucks and Buses</text><text x="1449.85" y="721.00" font-size="12.27" font-weight="400" fill="#222" text-anchor="middle">Trains</text><text x="1552.96" y="721.00" font-size="12.63" font-weight="400" fill="#222" text-anchor="middle">Ships</text><text x="1655.73" y="721.00" font-size="12.43" font-weight="400" fill="#222" text-anchor="middle">Planes</text><text x="1760.19" y="721.00" font-size="13.34" font-weight="400" fill="#222" text-anchor="middle">Motorcycles</text></svg></body></html>
